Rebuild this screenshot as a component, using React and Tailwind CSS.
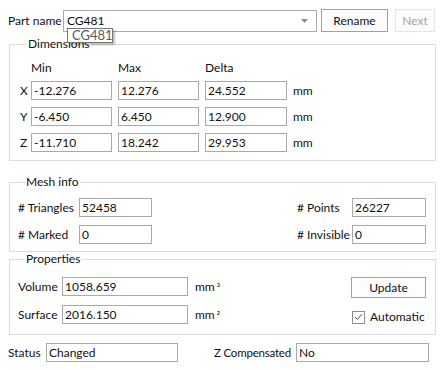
import React from "react";

const Field = ({ value, className = "" }) => (
  <div className={`h-[19px] border border-[#a9a9a9] bg-white pl-[2px] leading-[17px] ${className}`}>
    {value}
  </div>
);

const Group = ({ title, className = "", children }) => (
  <fieldset className={`mx-[9px] border border-[#dcdcdc] ${className}`}>
    <legend className="ml-[7px] px-[1px] leading-[14px]">{title}</legend>
    {children}
  </fieldset>
);

const dims = [
  ["X", "-12.276", "12.276", "24.552"],
  ["Y", "-6.450", "6.450", "12.900"],
  ["Z", "-11.710", "18.242", "29.953"],
];

export default function App() {
  return (
    <div className="relative w-[445px] h-[370px] bg-white whitespace-nowrap text-[12px] text-[#111] font-['Lato','Liberation_Sans',sans-serif]">
      {/* part name row */}
      <div className="flex items-center pt-[9px] pl-[8px] h-[32px]">
        <span className="w-[55px]">Part name</span>
        <div className="flex items-center w-[254px] h-[22px] border border-[#a9a9a9] pl-[3px] pr-[8px]">
          <span className="flex-1">CG481</span>
          <svg width="7" height="4" viewBox="0 0 7 4">
            <path d="M0 0h7L3.5 4z" fill="#8a8a8a" />
          </svg>
        </div>
        <button className="ml-[4px] w-[67px] h-[23px] border border-[#a0a0a0] bg-[#fdfdfd]">Rename</button>
        <button className="ml-[7px] w-[40px] h-[23px] border border-[#e3e3e3] bg-[#fcfcfc] text-[#a3a3a3]">Next</button>
      </div>

      {/* tooltip */}
      <div className="absolute left-[67px] top-[28px] w-[46px] h-[15px] border border-[#767676] bg-white text-[#5a5a5a] text-[13px] leading-[13px] pl-[4px] shadow-[2px_2px_2px_rgba(0,0,0,0.25)]">
        CG481
      </div>

      <Group title="Dimensions" className="mt-[5px] pt-[10px] pb-[8px] pl-[10px]">
        <div className="flex pl-[11px] leading-[14px]">
          <span className="w-[87px]">Min</span>
          <span className="w-[87px]">Max</span>
          <span>Delta</span>
        </div>
        <div className="flex flex-col gap-[7px] mt-[6px]">
          {dims.map(([axis, min, max, delta]) => (
            <div key={axis} className="flex items-center">
              <span className="w-[11px]">{axis}</span>
              <Field value={min} className="w-[81px]" />
              <Field value={max} className="w-[81px] ml-[6px]" />
              <Field value={delta} className="w-[82px] ml-[6px]" />
              <span className="ml-[6px]">mm</span>
            </div>
          ))}
        </div>
      </Group>

      <Group title="Mesh info" className="mt-[14px] pt-[9px] pb-[7px] pl-[8px] pr-[9px]">
        <div className="flex flex-col gap-[8px]">
          <div className="flex items-center">
            <span className="w-[61px]"># Triangles</span>
            <Field value="52458" className="w-[73px]" />
            <span className="ml-auto w-[55px]"># Points</span>
            <Field value="26227" className="w-[74px]" />
          </div>
          <div className="flex items-center">
            <span className="w-[61px]"># Marked</span>
            <Field value="0" className="w-[73px]" />
            <span className="ml-auto w-[55px]"># Invisible</span>
            <Field value="0" className="w-[74px]" />
          </div>
        </div>
      </Group>

      <Group title="Properties" className="pt-[11px] pb-[8px] pl-[8px] pr-[9px]">
        <div className="flex">
          <div className="flex flex-col gap-[9px]">
            <div className="flex items-center">
              <span className="w-[44px]">Volume</span>
              <Field value="1058.659" className="w-[126px]" />
              <span className="ml-[7px]">mm<span className="ml-[2px] text-[10px]">³</span></span>
            </div>
            <div className="flex items-center">
              <span className="w-[44px]">Surface</span>
              <Field value="2016.150" className="w-[126px]" />
              <span className="ml-[7px]">mm<span className="ml-[2px] text-[10px]">²</span></span>
            </div>
          </div>
          <div className="ml-auto flex flex-col w-[75px]">
            <button className="h-[21px] border border-[#a0a0a0] bg-[#fdfdfd]">Update</button>
            <div className="flex items-center mt-[10px] pl-[1px]">
              <span className="w-[13px] h-[13px] border border-[#8c8c8c] bg-white flex items-center justify-center">
                <svg width="9" height="8" viewBox="0 0 9 8">
                  <path d="M1 4l2.5 2.5L8 1" fill="none" stroke="#555" strokeWidth="1" />
                </svg>
              </span>
              <span className="ml-[5px]">Automatic</span>
            </div>
          </div>
        </div>
      </Group>

      {/* status row */}
      <div className="flex items-center mt-[8px] pl-[8px]">
        <span className="w-[38px]">Status</span>
        <Field value="Changed" className="w-[132px]" />
        <span className="ml-[36px] w-[82px] text-[11.5px] tracking-[-0.2px]">Z Compensated</span>
        <Field value="No" className="w-[133px]" />
      </div>
    </div>
  );
}
